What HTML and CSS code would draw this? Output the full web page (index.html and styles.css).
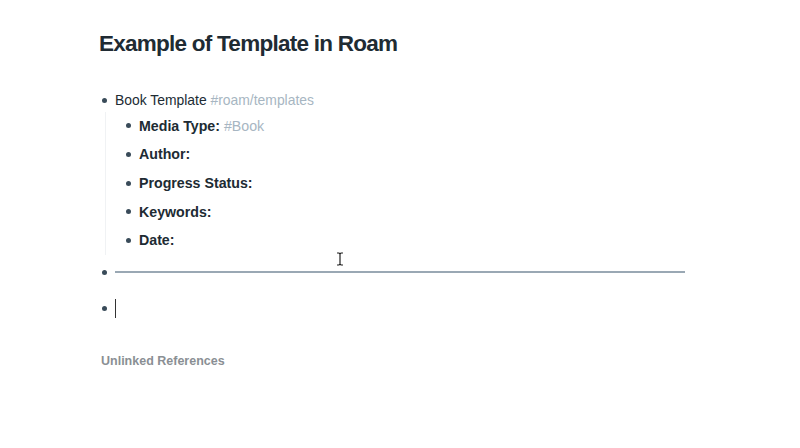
FILE: index.html
```html
<!DOCTYPE html>
<html>
<head>
<meta charset="utf-8">
<link rel="stylesheet" href="styles.css">
</head>
<body>
<div class="page">
  <h1 class="title">Example of Template in Roam</h1>
  <div class="blocks">
    <div class="block">
      <div class="row"><span class="bullet"></span><span class="text">Book Template <span class="tag">#roam/templates</span></span></div>
      <div class="children">
        <div class="row child"><span class="bullet"></span><span class="text"><b>Media Type:</b> <span class="tag">#Book</span></span></div>
        <div class="row child"><span class="bullet"></span><span class="text"><b>Author:</b></span></div>
        <div class="row child"><span class="bullet"></span><span class="text"><b>Progress Status:</b></span></div>
        <div class="row child"><span class="bullet"></span><span class="text"><b>Keywords:</b></span></div>
        <div class="row child"><span class="bullet"></span><span class="text"><b>Date:</b></span></div>
      </div>
    </div>
    <div class="row hr-row"><span class="bullet"></span><div class="hr"></div></div>
    <div class="row caret-row"><span class="bullet"></span><span class="caret"></span></div>
  </div>
  <div class="refs">Unlinked References</div>
  <svg class="ibeam" width="8" height="14" viewBox="0 0 8 14"><path d="M1 1h2l1 1 1-1h2M4 2v10M1 13h2l1-1 1 1h2" fill="none" stroke="#222" stroke-width="1.2"/></svg>
</div>
</body>
</html>
```
FILE: styles.css
```css
* { box-sizing: border-box; }
html, body { margin: 0; padding: 0; background: #fff; }
body { font-family: "Liberation Sans", Arial, sans-serif; color: #202b33; }
.page { position: relative; width: 800px; height: 448px; padding: 27px 0 0 99px; }
.title { margin: 0; font-size: 22.5px; font-weight: 700; line-height: 34px; letter-spacing: -0.75px; color: #202b33; }
.blocks { margin-top: 25px; }
.row { display: flex; align-items: center; height: 28.6px; font-size: 14.2px; }
.row.top { font-size: 14px; }
.bullet { width: 5px; height: 5px; border-radius: 50%; background: #394b59; margin-left: 3px; margin-right: 8px; flex: none; }
.text { color: #202b33; white-space: nowrap; }
.block > .row .text { font-size: 13.9px; }
.text b { font-weight: 700; }
.tag { color: #a7b6c2; }
.children { margin-left: 6px; padding-left: 17px; border-left: 1px solid #f0f2f4; margin-top: -3px; }
.child { height: 28.6px; }
.hr-row { height: 34px; margin-top: 1px; }
.hr { width: 570px; height: 2px; background: #9aa8b4; margin-top: -1px; }
.caret-row { height: 38px; }
.caret { width: 1px; height: 19px; background: #333; }
.refs { margin-top: 26px; margin-left: 2px; font-size: 12.5px; font-weight: 700; color: #8a8f94; }
.ibeam { position: absolute; left: 336px; top: 252px; }
```
